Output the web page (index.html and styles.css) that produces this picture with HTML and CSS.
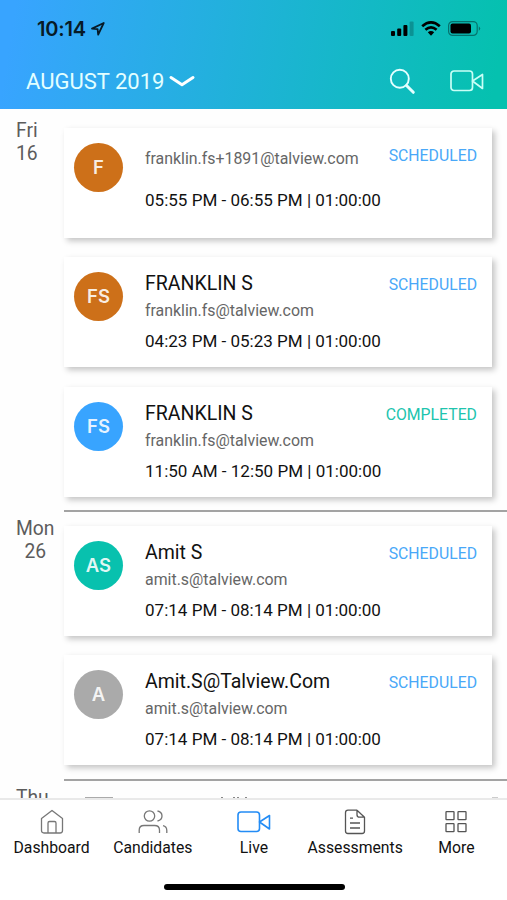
FILE: index.html
```html
<!DOCTYPE html>
<html lang="en">
<head>
<meta charset="utf-8">
<title>Live interviews</title>
<link rel="stylesheet" href="styles.css">
</head>
<body>
<div class="app">
  <header class="header">
    <div class="status-bar">
      <div class="clock"><span>10:14</span>
        <svg width="14" height="14" viewBox="0 0 14 14"><path d="M1 6.6 12.7 1 7.2 12.6 6.6 7.2Z" fill="none" stroke="#071a26" stroke-width="1.8" stroke-linejoin="round"/></svg>
      </div>
      <div class="indicators">
        <svg width="23" height="15" viewBox="0 0 23 15"><rect x="0" y="10" width="4" height="5" rx="1"/><rect x="6.2" y="7.5" width="4" height="7.5" rx="1"/><rect x="12.4" y="4" width="4" height="11" rx="1"/><rect x="18.6" y="0.5" width="4" height="14.5" rx="1" opacity=".22"/></svg>
        <svg width="20" height="15" viewBox="0 0 20 15"><path d="M1.2 5.2Q10-2.4 18.8 5.2M4.4 8.7Q10 4 15.6 8.7" fill="none" stroke="#000" stroke-width="2.7"/><path d="M6.8 11.3Q10 8.8 13.2 11.3L10 14.8Z"/></svg>
        <svg width="33" height="15" viewBox="0 0 33 15"><rect x=".6" y=".6" width="28.6" height="13.8" rx="4" fill="none" stroke="#000" stroke-opacity=".4" stroke-width="1.2"/><rect x="2.5" y="2.5" width="20.5" height="10" rx="2"/><path d="M30.8 5.2Q33.6 7.5 30.8 9.8Z" opacity=".4"/></svg>
      </div>
    </div>
    <div class="toolbar">
      <div class="month"><span>AUGUST 2019</span>
        <svg width="26" height="13" viewBox="0 0 26 13"><path d="M2 2.5 13 9.7 24 2.5" fill="none" stroke="#fff" stroke-width="3" stroke-linecap="round" stroke-linejoin="round"/></svg>
      </div>
      <div class="actions">
        <svg width="27" height="27" viewBox="0 0 27 27" fill="none" stroke="#e3ffff" stroke-linecap="round"><circle cx="10.8" cy="10.8" r="9" stroke-width="1.9"/><path d="M17.5 17.5 24.3 24.3" stroke-width="3"/></svg>
        <svg width="34" height="22" viewBox="0 0 34 22" fill="none" stroke="#c9fff6" stroke-width="1.7" stroke-linejoin="round"><rect x="1" y="1" width="21.5" height="19.5" rx="3"/><path d="M22.5 11 32.5 4.5V18.5Z"/></svg>
      </div>
    </div>
  </header>

  <main class="schedule">
    <section class="day">
      <div class="date">Fri<br>16</div>
      <div class="cards">
        <article class="card unnamed">
          <div class="avatar orange">F</div>
          <div class="details"><div class="email">franklin.fs+1891@talview.com</div><div class="time">05:55 PM - 06:55 PM | 01:00:00</div></div>
          <div class="status">SCHEDULED</div>
        </article>
        <article class="card">
          <div class="avatar orange">FS</div>
          <div class="details"><div class="name">FRANKLIN S</div><div class="email">franklin.fs@talview.com</div><div class="time">04:23 PM - 05:23 PM | 01:00:00</div></div>
          <div class="status">SCHEDULED</div>
        </article>
        <article class="card">
          <div class="avatar blue">FS</div>
          <div class="details"><div class="name">FRANKLIN S</div><div class="email">franklin.fs@talview.com</div><div class="time">11:50 AM - 12:50 PM | 01:00:00</div></div>
          <div class="status completed">COMPLETED</div>
        </article>
      </div>
    </section>
    <section class="day">
      <div class="date">Mon<br>26</div>
      <div class="cards">
        <article class="card">
          <div class="avatar teal">AS</div>
          <div class="details"><div class="name">Amit S</div><div class="email">amit.s@talview.com</div><div class="time">07:14 PM - 08:14 PM | 01:00:00</div></div>
          <div class="status">SCHEDULED</div>
        </article>
        <article class="card">
          <div class="avatar gray">A</div>
          <div class="details"><div class="name">Amit.S@Talview.Com</div><div class="email">amit.s@talview.com</div><div class="time">07:14 PM - 08:14 PM | 01:00:00</div></div>
          <div class="status">SCHEDULED</div>
        </article>
      </div>
    </section>
    <section class="day">
      <div class="date">Thu</div>
      <svg class="next" width="443" height="19" viewBox="0 0 443 19"><path d="M21 16H49V18H21Z" fill="#aaa"/><path d="M157 16h2v2h-2zM169 16h2v2h-2zM173 16h2v2h-2zM181 16h2v2h-2z" fill="#888"/><path d="M428 16h6v2h-6z" fill="#ccc"/></svg>
    </section>
  </main>

  <nav class="tabs">
    <a class="tab"><svg width="24" height="26" viewBox="0 0 24 26"><path d="M1.5 9.5 12 1.5 22.500 9.500V21.500Q22.500 24 20 24H4Q1.500 24 1.500 21.500ZM8 24V14Q8 12.500 9.500 12.500H14.500Q16 12.500 16 14V24"/></svg><span>Dashboard</span></a>
    <a class="tab"><svg width="30" height="26" viewBox="0 0 30 26"><circle cx="11.500" cy="7" r="5.200"/><path d="M1.200 24V21Q1.200 16.500 6 16.500H16.500Q21.500 16.500 21.500 21V24M19.500 2Q24 3 24 7T19.500 12M25 16.700Q28.800 17.500 28.800 21.500V24"/></svg><span>Candidates</span></a>
    <a class="tab live"><svg width="34" height="26" viewBox="0 0 34 26"><rect x="1" y="3" width="21.500" height="19.500" rx="3"/><path d="M22.500 13 32.500 6.500V20Z"/></svg><span>Live</span></a>
    <a class="tab dark"><svg width="22" height="26" viewBox="0 0 22 26"><path d="M13 1.200H4Q1.500 1.200 1.500 3.700V22Q1.500 24.500 4 24.500H18Q20.500 24.500 20.500 22V8.200L13 1.200V5.700Q13 8.200 15.500 8.200H20.500M6 9.200H9M6 14H16M6 19H16"/></svg><span>Assessments</span></a>
    <a class="tab dark"><svg width="22" height="26" viewBox="0 0 22 26"><rect x="1" y="2.700" width="8" height="8" rx=".5"/><rect x="13" y="2.700" width="8" height="8" rx=".5"/><rect x="1" y="14.700" width="8" height="8" rx=".5"/><rect x="13" y="14.700" width="8" height="8" rx=".5"/></svg><span>More</span></a>
  </nav>
  <div class="home-area"><div class="home-indicator"></div></div>
</div>
</body>
</html>
```
FILE: styles.css
```css
* { box-sizing: border-box; }
body { margin: 0; background: #fff; font-family: Roboto, "Liberation Sans", sans-serif; }
svg { display: block; flex: none; }
.app { width: 507px; height: 900px; display: flex; flex-direction: column; overflow: hidden; }

.header { flex: none; height: 108.5px; background: linear-gradient(99deg, #38a4ff 3%, #05c1af 97%); }
.status-bar { height: 56px; display: flex; justify-content: space-between; padding: 1px 26px 0 37px; align-items: center; }
.clock { display: flex; align-items: center; gap: 5px; font: 600 20px/24px Inter, sans-serif; letter-spacing: -.2px; color: #071a26; }
.indicators { display: flex; align-items: center; gap: 7px; }
.toolbar { height: 50px; display: flex; align-items: center; justify-content: space-between; padding: 0 23px 0 26px; }
.month { display: flex; align-items: center; gap: 5px; font-size: 22px; color: #e3ffff; }
.month span { width: 138px; white-space: nowrap; }
.actions { display: flex; align-items: center; gap: 34px; }

.schedule { flex: 1; min-height: 0; overflow: hidden; padding-top: 5.5px; background: #fefefe; }
.day { display: flex; justify-content: space-between; }
.date { flex: none; padding: 5px 0 0 16px; font-size: 19.3px; line-height: 23px; color: #5c5c5c; text-align: center; }
.cards { width: 443px; padding: 13.5px 15px 13.5px 0; border-bottom: 2px solid #a3a3a3; display: flex; flex-direction: column; gap: 19.5px; }
.card { height: 110px; padding: 15px 15px 0 10px; display: flex; background: #fff; box-shadow: 3px 3px 6px rgba(0, 0, 0, .23); }
.avatar { flex: none; width: 49px; height: 49px; border-radius: 50%; display: flex; align-items: center; justify-content: center; font: 600 18.5px/1 Inter, sans-serif; color: rgba(255, 255, 255, .88); }
.orange { background: #cd7019; }
.blue { background: #38a4ff; }
.teal { background: #08c1ae; }
.gray { background: #aaa; }
.details { margin-left: 22px; white-space: nowrap; }
.name { font-size: 19.5px; line-height: 24px; color: #111; }
.email { margin-top: 5px; font-size: 15.9px; line-height: 20px; color: #666; }
.time { margin-top: 10px; font-size: 17.05px; line-height: 21px; color: #111; }
.unnamed .email { margin-top: 6px; }
.unnamed .time { margin-top: 21px; }
.status { margin-left: auto; font-size: 15.8px; line-height: 25px; color: #49a8f8; }
.completed { color: #20c4ae; }

.tabs { flex: none; height: 64px; padding-left: 1px; border-top: 2px solid #e9e9e9; display: grid; grid-template-columns: repeat(5, 101.2px); background: #fff; }
.tab { padding-top: 9px; display: flex; flex-direction: column; align-items: center; gap: 3px; font-size: 15.75px; line-height: 20px; color: #111; }
.tab svg { fill: none; stroke: #777; stroke-width: 1.3; stroke-linejoin: round; }
.tab.dark svg { stroke: #555; }
.tab.live svg { stroke: #238cf5; stroke-width: 1.6; }
.home-area { flex: none; height: 38px; display: flex; justify-content: center; padding: 22px 0 0 1px; }
.home-indicator { width: 181px; height: 6px; border-radius: 3px; background: #000; }
```
